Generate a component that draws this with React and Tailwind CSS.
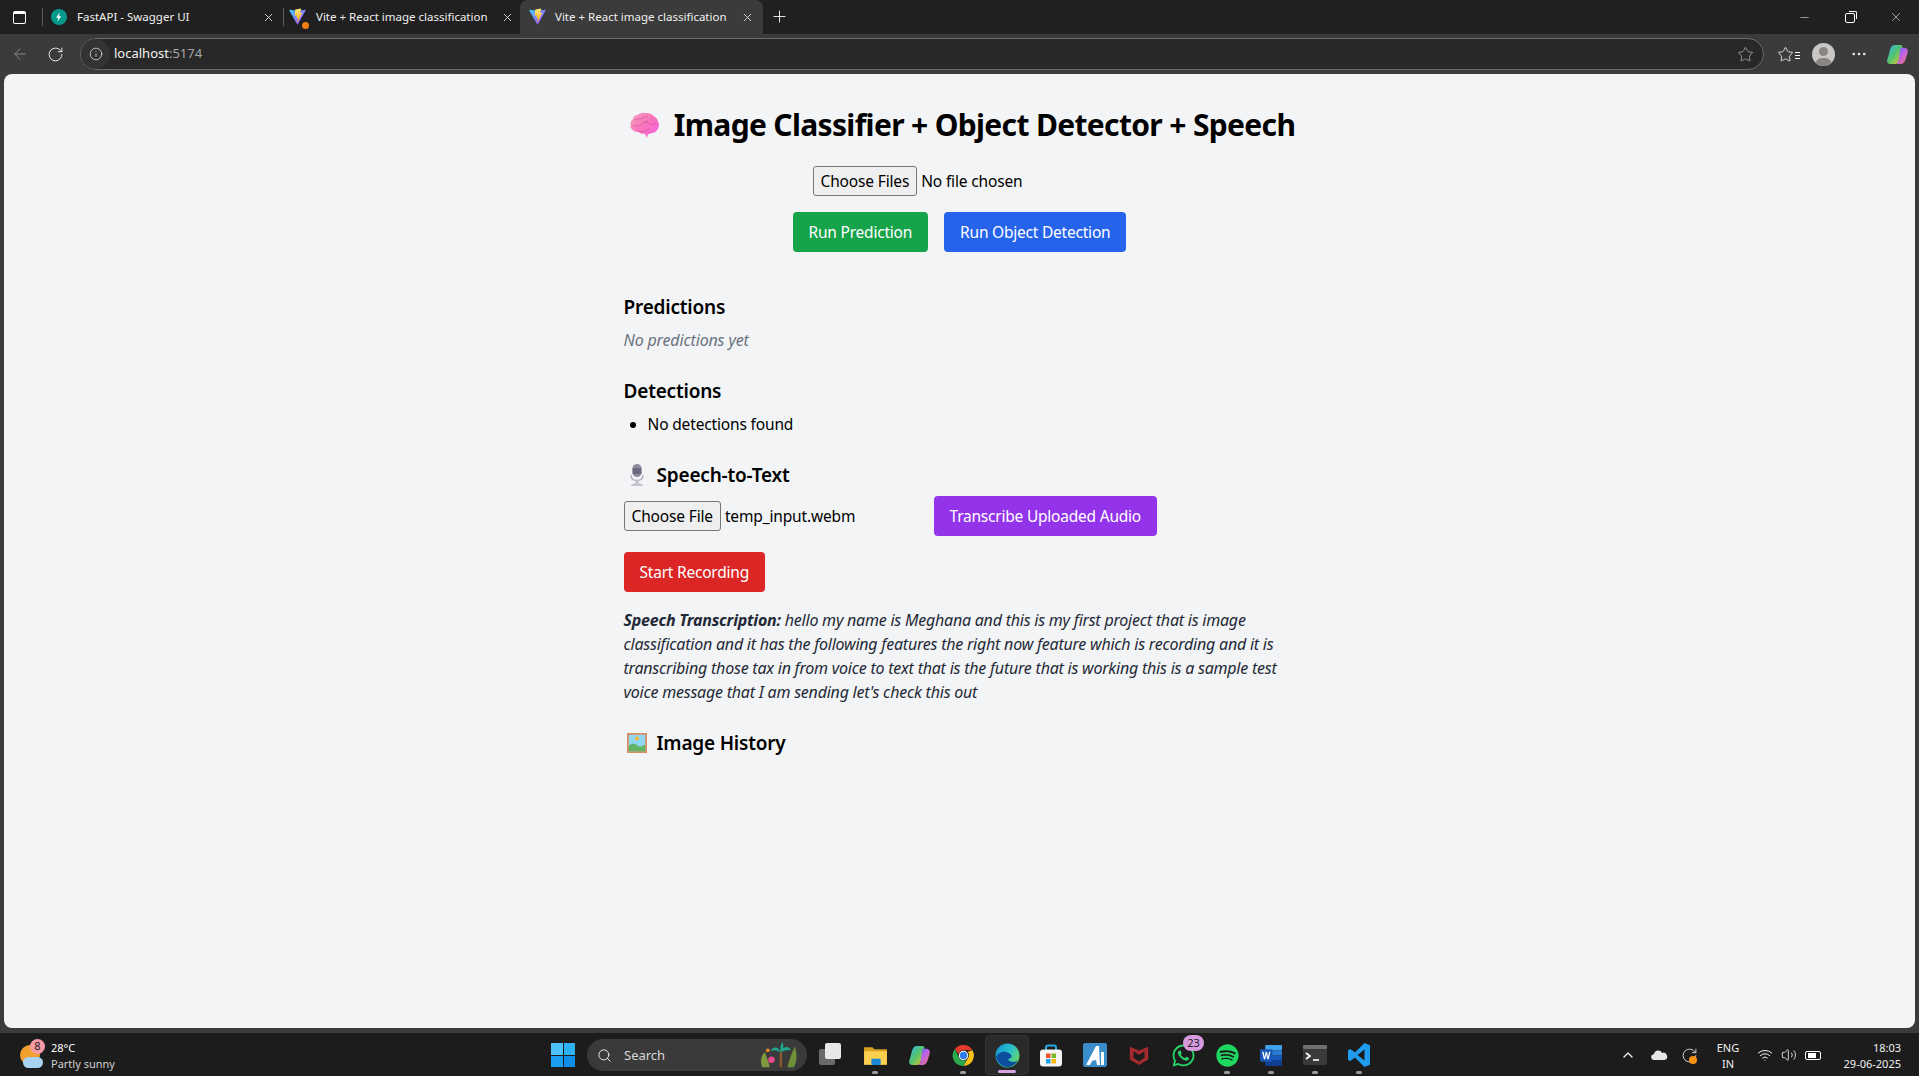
import React from "react";
import { FaWhatsapp, FaSpotify } from "react-icons/fa";
import { ArrowLeft, RotateCw, Info, Star, X, Plus, Minus, Search, ChevronUp, Wifi, Volume2, MoreHorizontal } from "lucide-react";

const Vite = ({ dot }) => (
  <span className="relative block w-4 h-4 shrink-0">
    <svg viewBox="0 0 24 24" className="w-[17px] h-[17px] -mt-px">
      <defs>
        <linearGradient id="vg" x1="0" y1="0" x2="1" y2="1"><stop offset="0" stopColor="#41d1ff" /><stop offset="1" stopColor="#bd34fe" /></linearGradient>
        <linearGradient id="vy" x1="0" y1="0" x2="0" y2="1"><stop offset="0" stopColor="#ffea83" /><stop offset="1" stopColor="#ffa800" /></linearGradient>
      </defs>
      <path d="M23.5 3.5 12.6 23c-.3.5-.9.5-1.2 0L.4 3.5C.1 3 .6 2.3 1.2 2.400L12 4.300l10.700-1.900c.6-.1 1.100.6.800 1.100z" fill="url(#vg)" />
      <path d="M17 .6 9 2.200c-.2 0-.3.200-.3.300l-.5 8.300c0 .2.200.4.400.3l2.200-.5c.2 0 .4.100.4.400l-.7 3.200c0 .2.200.4.400.3l1.400-.4c.2-.1.400.1.400.3l-1 5.200c-.1.300.3.500.5.200l.1-.2 6.300-12.600c.1-.2-.1-.5-.3-.4l-2.300.4c-.2 0-.4-.2-.3-.4l1.500-5.300c.1-.2-.1-.4-.3-.3z" fill="url(#vy)" />
    </svg>
    {dot && <span className="absolute left-[13px] top-[13px] w-[7px] h-[7px] rounded-full bg-[#f07f13]" />}
  </span>
);

const Tab = ({ icon, title, active, sep }) => (
  <div className={`relative flex items-center h-[34px] w-[243px] shrink-0 ${active ? "pl-[9px] pr-[9px] bg-[#3b3b3b] rounded-t-[8px] rounded-b-none" : "pl-[6px] pr-[12px]"}`}>
    {sep && <span className="absolute left-0 top-[8px] w-px h-[18px] bg-[#5c5c5c]" />}
    {icon}
    <span className={`${active ? "ml-[10px]" : "ml-[11px]"} -mt-px text-[11.500px] text-[#f0f0f0] whitespace-nowrap`}>{title}</span>
    <X className="ml-auto text-[#e8e8e8]" size={13} strokeWidth={1.600} />
  </div>
);

const Badge = ({ children, className }) => (
  <span className={`absolute flex items-center justify-center rounded-full text-[11px] text-[#1c1c1c] ${className}`}>{children}</span>
);

const TaskIcon = ({ children, dot, active, badge }) => (
  <div className={`relative w-[44px] h-[40px] flex items-center justify-center shrink-0 rounded-[4px] ${active ? "bg-[#2a2a2a] border border-[#333333]" : ""}`}>
    {children}
    {badge && <Badge className="left-[22px] top-[0px] w-[21px] h-[16px] bg-[#d79ade]">{badge}</Badge>}
    {dot && <span className="absolute bottom-px left-[19px] w-[6px] h-[3px] rounded-full bg-[#9b9b9b]" />}
    {active && <span className="absolute bottom-px left-[12px] w-[18px] h-[3px] rounded-full bg-[#d7a4e4]" />}
  </div>
);

const FileControl = ({ btn, text }) => (
  <div className="w-[294px] shrink-0 flex items-center">
    <span className="inline-flex items-center h-[30px] px-[7px] pt-px bg-[#efefef] border border-[#767676] rounded-[3px] text-black leading-none">{btn}</span>
    <span className="ml-[4px] pt-px">{text}</span>
  </div>
);

const Btn = ({ className, children }) => (
  <button className={`h-10 px-4 pt-px rounded text-white tracking-[-0.014em] whitespace-nowrap ${className}`}>{children}</button>
);

const Brain = () => (
  <svg viewBox="0 0 30 27" className="w-[30px] h-[27px] shrink-0">
    <defs><linearGradient id="br" x1="0" y1="0" x2="1" y2="1"><stop offset="0" stopColor="#f6a0b8" /><stop offset="0.500" stopColor="#f975bd" /><stop offset="1" stopColor="#f65fe0" /></linearGradient></defs>
    <path d="M1 13C0 10 2 8 3 7c0-3 4-4 6-5 3-2 6-1 8-1 3 0 6 2 8 4 2 1 3 3 3 5 2 2 1 6-1 8-1 2-3 3-5 3-2 1-3 1-4 1l-1 4-2-4c-3 0-5-1-7-2-3 0-6-2-7-4-1-1-1-2 0-3z" fill="url(#br)" />
    <path d="M5 8c3-2 5 0 8-2 1-1 3-2 5-1M3 14c3-1 6 1 9-2 2-2 5-2 8 0 2 1 4 0 6-1M9 19c3 1 7 1 10-3M14 9c1 1 3 1 4 0M21 5c0 2 1 3 3 3" stroke="#df5fa6" strokeWidth="1" fill="none" />
  </svg>
);

const Mic = () => (
  <svg viewBox="0 0 22 24" className="ml-[2px] w-[22px] h-[24px] shrink-0">
    <rect x="6.500" y="1" width="9" height="13" rx="4.500" fill="#8f8aa0" />
    <path d="M6.500 6h9M6.500 8h9M6.500 10h9" stroke="#4b4660" strokeWidth="1.100" />
    <path d="M5 12c0 4 2.500 5.500 6 5.500s6-1.500 6-5.500" stroke="#b7b2c4" strokeWidth="1.500" fill="none" />
    <rect x="9.500" y="17" width="3" height="3" fill="#c5c0d0" />
    <path d="M5 23c0-2 2.500-3 6-3s6 1 6 3z" fill="#c8c3d2" />
  </svg>
);

const Picture = () => (
  <svg viewBox="0 0 22 22" className="ml-[3px] w-[20px] h-[20px] shrink-0">
    <rect width="22" height="22" fill="#d98f66" />
    <rect x="2" y="2" width="18" height="18" fill="#8fd8ef" />
    <circle cx="11" cy="6" r="2.200" fill="#f6b73c" />
    <path d="M2 14c4-4 8-2 10 0s5 0 8-1v7H2z" fill="#5fb563" />
  </svg>
);

const SectionTitle = ({ icon, children, className = "" }) => (
  <h2 className={`flex items-center text-[19px] tracking-[-0.01em] font-semibold leading-7 text-black ${className}`}>
    {icon && <span className="w-[33px] flex justify-start">{icon}</span>}
    {children}
  </h2>
);

const Copilot = ({ s = 22 }) => (
  <svg viewBox="0 0 24 24" width={s} height={s}>
    <defs>
      <linearGradient id="c1" x1="0" y1="0" x2="1" y2="1"><stop offset="0" stopColor="#2fb4f0" /><stop offset="0.500" stopColor="#56c46a" /><stop offset="1" stopColor="#f4c430" /></linearGradient>
      <linearGradient id="c2" x1="0" y1="0" x2="1" y2="1"><stop offset="0" stopColor="#3b6cf0" /><stop offset="0.500" stopColor="#c062e8" /><stop offset="1" stopColor="#f8756a" /></linearGradient>
    </defs>
    <path d="M9 2h6c2 0 2.500 1.500 2 3l-4 14c-.5 2-2 3-4 3H5c-3 0-4.500-2-3.500-5l2-7C4.500 5 6 2 9 2z" fill="url(#c1)" />
    <path d="M15 5h4c3 0 4.500 2.500 3.500 5.500l-2 6.500c-1 3-2.500 5-5.500 5H9c2 0 3.500-1 4-3z" fill="url(#c2)" />
  </svg>
);

export default function App() {
  return (
    <div className="h-[1076px] w-full overflow-hidden flex flex-col bg-[#3b3b3b] font-['Noto_Sans','Open_Sans',sans-serif]">
      {/* title bar */}
      <div className="h-[34px] shrink-0 flex items-center bg-[#202020]">
        <div className="w-[40px] flex justify-center shrink-0 -ml-px">
          <span className="block w-[13px] h-[13px] border-[1.500px] border-white rounded-[2px] border-t-[3px]" />
        </div>
        <div className="w-[4px] shrink-0 relative"><span className="absolute left-[3px] -top-[9px] w-px h-[18px] bg-[#5c5c5c]" /></div>
        <div className="w-[240px] shrink-0 flex items-center h-[34px] pl-[8px] pr-[8px]">
          <span className="w-4 h-4 rounded-full bg-[#05998b] flex items-center justify-center shrink-0">
            <svg viewBox="0 0 16 16" className="w-3 h-3"><path d="M9 2 4 9h3l-1 5 5-7H8z" fill="#fff" /></svg>
          </span>
          <span className="ml-[10px] -mt-px text-[11.500px] text-[#f0f0f0]">FastAPI - Swagger UI</span>
          <X className="ml-auto text-[#e8e8e8]" size={13} strokeWidth={1.600} />
        </div>
        <Tab sep icon={<Vite dot />} title="Vite + React image classification" />
        <div className="-ml-[6px]"><Tab active icon={<Vite />} title="Vite + React image classification" /></div>
        <Plus className="ml-[7px] -mt-px text-[#f0f0f0]" size={19} strokeWidth={1.200} />
        <div className="ml-auto flex items-center h-full">
          <div className="w-[46px] flex justify-center"><Minus size={13} strokeWidth={1} className="text-white" /></div>
          <div className="w-[46px] flex justify-center">
            <span className="relative block w-[10px] h-[10px] border border-white rounded-[2px] mt-[2px]"><span className="absolute -right-[3px] -top-[3px] w-[8px] h-[8px] border-t border-r border-white rounded-tr-[2px]" /></span>
          </div>
          <div className="w-[46px] flex justify-center"><X size={14} strokeWidth={1} className="text-white" /></div>
        </div>
      </div>
      {/* toolbar */}
      <div className="h-[40px] shrink-0 flex items-center bg-[#3b3b3b]">
        <ArrowLeft size={18} strokeWidth={1.300} className="ml-[11px] text-[#8a8a8a]" />
        <RotateCw size={17} strokeWidth={1.400} className="ml-[18px] text-[#e6e6e6]" />
        <div className="ml-[16px] flex-1 h-[32px] flex items-center rounded-full border border-[#6b6b6b] bg-[#282828]">
          <span className="w-[29px] h-[30px] rounded-full bg-[#333333] flex items-center justify-center shrink-0"><Info size={14} strokeWidth={1.300} className="text-[#e0e0e0]" /></span>
          <span className="ml-[4px] text-[13px] text-[#f2f2f2]">localhost<span className="text-[#a6a6a6]">:5174</span></span>
          <Star size={17} strokeWidth={1.200} className="ml-auto mr-[9px] text-[#a8a8a8]" />
        </div>
        <div className="w-[155px] shrink-0 flex items-center">
          <span className="relative ml-[13px]"><Star size={17} strokeWidth={1.300} className="text-[#e6e6e6]" /></span>
          <span className="ml-[1px] flex flex-col gap-[2px] mt-[2px]"><i className="block w-[5px] h-px bg-white" /><i className="block w-[5px] h-px bg-white" /><i className="block w-[5px] h-px bg-white" /></span>
          <span className="relative ml-[12px] w-[23px] h-[23px] rounded-full bg-[#c9c6c3] overflow-hidden shrink-0">
            <span className="absolute left-[7px] top-[4px] w-[9px] h-[9px] rounded-full bg-[#8a8683]" />
            <span className="absolute left-[3px] top-[15px] w-[17px] h-[14px] rounded-full bg-[#8a8683]" />
          </span>
          <MoreHorizontal size={18} strokeWidth={1.500} className="ml-[15px] text-[#f0f0f0]" />
          <span className="ml-[18px]"><Copilot s={23} /></span>
        </div>
      </div>
      {/* page */}
      <div className="h-[954px] shrink-0 mx-[4px] bg-[#f3f4f6] rounded-[8px] overflow-hidden">
        <div className="w-[672px] mx-auto pt-[33px] text-[15.500px] tracking-[-0.01em] text-black">
          <h1 className="flex items-center justify-center pl-[6px] text-[30px] tracking-[-0.022em] font-bold leading-9 text-black whitespace-nowrap">
            <Brain /><span className="ml-[14px]">Image Classifier + Object Detector + Speech</span>
          </h1>
          <div className="mt-[23px] flex justify-center">
            <FileControl btn="Choose Files" text="No file chosen" />
          </div>
          <div className="mt-[16px] flex justify-center gap-4">
            <Btn className="bg-[#16a34a]">Run Prediction</Btn>
            <Btn className="bg-[#2563eb]">Run Object Detection</Btn>
          </div>
          <SectionTitle className="mt-[41px]">Predictions</SectionTitle>
          <p className="mt-[7px] leading-6 italic text-[16px] text-[#6b7280]">No predictions yet</p>
          <SectionTitle className="mt-[25px]">Detections</SectionTitle>
          <ul className="mt-[7px] list-disc pl-[24px] leading-6"><li>No detections found</li></ul>
          <SectionTitle className="mt-[25px]" icon={<Mic />}>Speech-to-Text</SectionTitle>
          <div className="mt-[7px] flex items-center gap-4">
            <FileControl btn="Choose File" text="temp_input.webm" />
            <Btn className="bg-[#9333ea]">Transcribe Uploaded Audio</Btn>
          </div>
          <div className="mt-[16px]"><Btn className="bg-[#dc2626]">Start Recording</Btn></div>
          <p className="mt-[16px] leading-6 italic text-[16px] tracking-[-0.014em] text-[#1f2937]">
            <strong className="font-bold">Speech Transcription:</strong> hello my name is Meghana and this is my first project that is image classification and it has the following features the right now feature which is recording and it is transcribing those tax in from voice to text that is the future that is working this is a sample test voice message that I am sending let's check this out
          </p>
          <SectionTitle className="mt-[25px]" icon={<Picture />}>Image History</SectionTitle>
        </div>
      </div>
      <div className="h-[5px] shrink-0" />
      {/* taskbar */}
      <div className="flex-1 flex items-center pt-px bg-[#1c1c1c] text-white">
        <div className="w-[550px] shrink-0 flex items-center pl-[20px]">
          <div className="relative w-[28px] h-[28px] shrink-0">
            <span className="absolute left-0 top-[4px] w-[20px] h-[20px] rounded-full bg-[#f2a02e]" />
            <span className="absolute left-[3px] top-[16px] w-[20px] h-[11px] rounded-full bg-[#a8d4f2]" />
            <Badge className="left-[10px] -top-[2px] w-[15px] h-[15px] bg-[#f79aa6]">8</Badge>
          </div>
          <div className="ml-[3px] pt-px flex flex-col text-[11px] leading-[16px]">
            <span>28°C</span><span className="text-[#d0d0d0]">Partly sunny</span>
          </div>
        </div>
        <div className="w-[24px] h-[24px] ml-px grid grid-cols-2 gap-[1px] shrink-0">
          <i className="bg-[#4cc2ff]" /><i className="bg-[#2fb1f5]" /><i className="bg-[#1a9ff0]" /><i className="bg-[#0f8fe8]" />
        </div>
        <div className="ml-[12px] w-[220px] h-[32px] shrink-0 rounded-full bg-[#3a3a3a] flex items-center pl-[10px] pr-[6px]">
          <Search size={15} strokeWidth={1.600} className="text-[#e8e8e8]" />
          <span className="ml-[12px] pt-px text-[13px] text-[#d8d8d8]">Search</span>
          <svg viewBox="0 0 44 30" className="ml-auto w-[44px] h-[28px]">
            <path d="M4 28c-3-8 0-14 3-16 2 6 4 10 5 16z" fill="#7f9a3c" />
            <path d="M38 28c4-8 3-15 1-22-3 6-6 14-8 22z" fill="#6f8f38" />
            <path d="M24 28V12" stroke="#8a5a2b" strokeWidth="2.500" />
            <path d="M24 12C20 4 15 7 13 11c4-2 7-1 11 1zm0 0c3-8 9-6 11-2-4-1-7 0-11 2zM24 12c-1-5 0-9 2-11 1 4 1 8-2 11z" fill="#1fa88e" />
            <circle cx="14" cy="20" r="3.500" fill="#ea4c89" /><circle cx="10" cy="10" r="2" fill="#e8892b" />
          </svg>
        </div>
        <div className="ml-[2px] flex shrink-0 w-[580px] items-start">
          <TaskIcon>
            <span className="relative block w-[24px] h-[24px]">
              <span className="absolute left-0 top-[6px] w-[16px] h-[16px] bg-[#6a6a6a] rounded-[2px]" />
              <span className="absolute left-[6px] top-0 w-[16px] h-[16px] bg-[#e8e8e8] rounded-[2px]" />
            </span>
          </TaskIcon>
          <TaskIcon dot>
            <svg viewBox="0 0 24 24" className="w-[25px] h-[25px]"><path d="M1 4h8l2 2h12v4H1z" fill="#d9a11f" /><path d="M1 8h22v13H1z" fill="#fbcf4f" /><rect x="8" y="15" width="9" height="6" rx="1" fill="#1c89d8" /></svg>
          </TaskIcon>
          <TaskIcon><Copilot s={23} /></TaskIcon>
          <TaskIcon dot>
            <svg viewBox="0 0 48 48" className="w-[25px] h-[25px]">
              <path d="M24 4a20 20 0 0 1 17.300 10H24a10 10 0 0 0-9.500 7L7.600 11.500A20 20 0 0 1 24 4z" fill="#e33b2e" />
              <path d="M41.300 14A20 20 0 0 1 24 44l8.600-15A10 10 0 0 0 32 17z" fill="#fbc116" />
              <path d="M24 44A20 20 0 0 1 7.600 11.500L15.800 29A10 10 0 0 0 30 32z" fill="#2da94f" />
              <circle cx="24" cy="24" r="9" fill="#fff" /><circle cx="24" cy="24" r="7" fill="#2f7bf0" />
            </svg>
          </TaskIcon>
          <TaskIcon active>
            <svg viewBox="0 0 24 24" className="w-[25px] h-[25px]">
              <defs><linearGradient id="ed" x1="0" y1="0" x2="1" y2="0.600"><stop offset="0" stopColor="#0c8fd6" /><stop offset="0.600" stopColor="#2cc2c9" /><stop offset="1" stopColor="#67d66a" /></linearGradient></defs>
              <circle cx="12" cy="12" r="11.500" fill="url(#ed)" />
              <path d="M1 13c3-5 9-6 13-3 3 2 2 5-1 5-1 2 2 3 5 3 2 0 3-1 4-2-2 5-6 7-10 7-5 0-10-4-11-10z" fill="#0b4f9e" />
            </svg>
          </TaskIcon>
          <TaskIcon>
            <svg viewBox="0 0 24 24" className="w-[24px] h-[25px]">
              <path d="M7 7V3.500C7 2.500 8 2 9 2h6c1 0 2 .5 2 1.500V7" stroke="#23a9e6" strokeWidth="2" fill="none" />
              <rect x="1" y="6" width="22" height="17" rx="3" fill="#f5f5f5" />
              <rect x="7" y="10" width="4.500" height="4.500" fill="#f0512a" /><rect x="12.500" y="10" width="4.500" height="4.500" fill="#7cb82a" />
              <rect x="7" y="15.500" width="4.500" height="4.500" fill="#1ea1e8" /><rect x="12.500" y="15.500" width="4.500" height="4.500" fill="#ffb900" />
            </svg>
          </TaskIcon>
          <TaskIcon>
            <svg viewBox="0 0 24 24" className="w-[24px] h-[24px]"><rect width="24" height="24" rx="2" fill="#3a8ccb" /><path d="M3 22 13 3h3l1 19h-3l-1-5-4 1-2 4zM18 9h3v13h-3z" fill="#fff" /></svg>
          </TaskIcon>
          <TaskIcon>
            <svg viewBox="0 0 24 24" className="w-[22px] h-[24px]"><path d="M2 3l10 4 10-4v14l-10 6-10-6zM6 8v7l6 4 6-4V8l-6 4z" fill="#a32a2e" /></svg>
          </TaskIcon>
          <TaskIcon badge="23"><FaWhatsapp size={25} color="#25d366" /></TaskIcon>
          <TaskIcon dot><FaSpotify size={23} color="#1ed760" /></TaskIcon>
          <TaskIcon dot>
            <svg viewBox="0 0 24 24" className="w-[25px] h-[25px]">
              <rect x="6" y="2" width="16" height="5" fill="#41a5ee" /><rect x="6" y="7" width="16" height="5" fill="#2b7cd3" /><rect x="6" y="12" width="16" height="5" fill="#185abd" /><rect x="6" y="17" width="16" height="5" fill="#103f91" />
              <rect x="1" y="6" width="12" height="12" rx="1" fill="#1a56b8" /><path d="M3 8.500h1.400l1 5 1-5h1.200l1 5 1-5H11l-1.700 7H8l-1-4.500-1 4.500H4.700z" fill="#fff" />
            </svg>
          </TaskIcon>
          <TaskIcon dot>
            <svg viewBox="0 0 24 24" className="w-[24px] h-[24px]"><rect y="2" width="24" height="20" rx="2" fill="#3a3a3a" /><rect y="2" width="24" height="4" rx="1" fill="#707070" /><path d="m3 10 4 3-4 3" stroke="#fff" strokeWidth="1.600" fill="none" /><path d="M10 17h6" stroke="#fff" strokeWidth="1.600" /></svg>
          </TaskIcon>
          <TaskIcon dot>
            <svg viewBox="0 0 24 24" className="w-[24px] h-[24px]"><path d="M17.500 0 7.900 9.500 3.400 6 1 7.200v9.600L3.400 18l4.500-3.500 9.600 9.500 5.500-2.200V2.200zM17.500 6.500v11L10.500 12z" fill="#1f9cf0" /><path d="M3.400 9.300v5.400L6 12z" fill="#1f9cf0" /></svg>
          </TaskIcon>
        </div>
        <div className="ml-auto flex items-center pr-[18px] shrink-0">
          <ChevronUp size={16} strokeWidth={2} className="text-[#f0f0f0]" />
          <svg viewBox="0 0 20 14" className="ml-[15px] w-[17px] h-[12px]"><path d="M4 13a3.500 3.500 0 0 1-.5-7A5 5 0 0 1 13 4.500a4 4 0 0 1 3 8.500z" fill="#e6e6e6" /></svg>
          <span className="relative ml-[13px] w-[17px] h-[17px] block">
            <RotateCw size={17} strokeWidth={1.200} className="text-[#e6e6e6]" />
            <span className="absolute left-[8px] top-[9px] w-[8px] h-[8px] rounded-full bg-[#f7930e]" />
          </span>
          <div className="ml-[17px] pt-px w-[26px] flex flex-col items-center text-[11px] leading-[16px] text-[#f0f0f0]"><span>ENG</span><span>IN</span></div>
          <Wifi size={16} strokeWidth={1.500} className="ml-[16px] text-[#f0f0f0]" />
          <Volume2 size={16} strokeWidth={1.300} className="ml-[8px] text-[#f0f0f0]" />
          <span className="relative ml-[8px] block w-[16px] h-[9px] border border-white rounded-[2px] bg-transparent"><span className="absolute left-[2px] top-[1px] bottom-[1px] w-[8px] bg-white" /></span>
          <div className="ml-[18px] pt-px w-[62px] flex flex-col items-end text-[11px] leading-[16px] text-[#f0f0f0]"><span>18:03</span><span>29-06-2025</span></div>
        </div>
      </div>
    </div>
  );
}
